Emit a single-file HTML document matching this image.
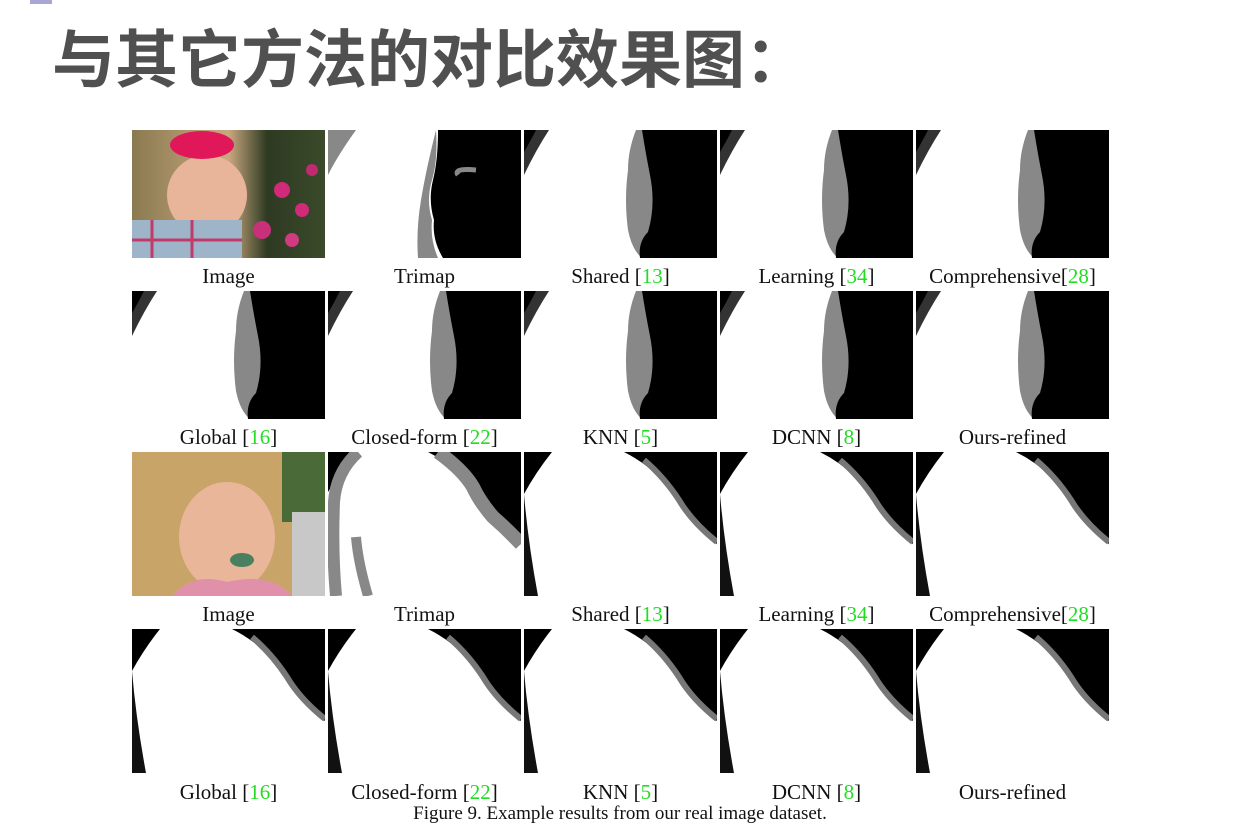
<!DOCTYPE html>
<html><head><meta charset="utf-8"><style>
body{margin:0;width:1233px;height:828px;background:#fff;position:relative;overflow:hidden;font-family:"Liberation Serif",serif}
.t{position:absolute;left:52px;top:10px;font:bold 63px "Noto Sans CJK SC","WenQuanYi Zen Hei",sans-serif;color:#505050;letter-spacing:0;white-space:nowrap}
.bar{position:absolute;left:30px;top:0;width:22px;height:4px;background:#a9a6d6}
svg.c{position:absolute;width:193px}
.l{position:absolute;width:193px;text-align:center;font-size:21px;color:#111;white-space:nowrap}
.g{color:#22dd22}
.cap{position:absolute;left:0;width:1240px;text-align:center;top:803px;font-size:19px;color:#111}
</style></head><body>
<div class="bar"></div>
<div class="t">与其它方法的对比效果图：</div>
<svg width="0" height="0" style="position:absolute">
<defs>
<g id="m1"><rect width="193" height="128" fill="#fff"/><path d="M0 0H25Q12 20 0 45Z" fill="#333"/><path d="M0 0H12Q6 12 0 22Z" fill="#000"/>
<path d="M104 40Q100 70 104 100Q108 120 118 128H130V0H112Q104 20 104 40Z" fill="#888"/>
<path d="M118 0H193V128H116Q114 112 124 102Q132 75 126 45Q122 25 118 0Z" fill="#000"/></g>
<g id="m2"><rect width="193" height="144" fill="#fff"/><path d="M0 0H28Q12 20 0 42Z" fill="#000"/><path d="M0 42Q4 90 14 144H0Z" fill="#111"/>
<path d="M100 0H193V92Q175 78 165 65Q150 40 135 25Q120 10 100 0Z" fill="#000"/><path d="M120 8Q140 25 155 48Q168 70 193 90" stroke="#777" stroke-width="6" fill="none"/></g>
</defs></svg>

<!-- Row 1 -->
<svg class="c" style="left:132px;top:130px;height:128px" viewBox="0 0 193 128" preserveAspectRatio="none">
<defs><linearGradient id="bg1" x1="0" x2="1"><stop offset="0" stop-color="#8a7a50"/><stop offset=".5" stop-color="#c9a880"/><stop offset=".7" stop-color="#2e3a22"/><stop offset="1" stop-color="#3a4a2a"/></linearGradient></defs>
<rect width="193" height="128" fill="url(#bg1)"/>
<ellipse cx="75" cy="65" rx="40" ry="40" fill="#e8b49a"/>
<path d="M0 90H110V128H0Z" fill="#9eb4c8"/><path d="M20 90V128M60 90V128M0 110H110" stroke="#c23a6a" stroke-width="3"/>
<ellipse cx="70" cy="15" rx="32" ry="14" fill="#e0185a"/>
<circle cx="150" cy="60" r="8" fill="#d02a78"/><circle cx="170" cy="80" r="7" fill="#d02a78"/><circle cx="130" cy="100" r="9" fill="#c8307a"/><circle cx="180" cy="40" r="6" fill="#c02a70"/><circle cx="160" cy="110" r="7" fill="#d03a80"/>
</svg>
<svg class="c" style="left:328px;top:130px;height:128px" viewBox="0 0 193 128" preserveAspectRatio="none">
<rect width="193" height="128" fill="#fff"/><path d="M0 0H28Q10 25 0 45Z" fill="#888"/><path d="M110 0H193V128H115Q104 110 106 90Q100 70 105 50Q110 30 110 0Z" fill="#000"/><path d="M108 0Q110 30 104 50Q98 70 104 90Q102 110 110 128H90Q88 100 93 70Q98 40 108 0Z" fill="#888"/><path d="M130 45Q125 38 148 40" stroke="#888" stroke-width="5" fill="none"/>
</svg>
<svg class="c" style="left:524px;top:130px;height:128px" viewBox="0 0 193 128" preserveAspectRatio="none"><use href="#m1"/></svg>
<svg class="c" style="left:720px;top:130px;height:128px" viewBox="0 0 193 128" preserveAspectRatio="none"><use href="#m1"/></svg>
<svg class="c" style="left:916px;top:130px;height:128px" viewBox="0 0 193 128" preserveAspectRatio="none"><use href="#m1"/></svg>
<div class="l" style="left:132px;top:264px">Image</div>
<div class="l" style="left:328px;top:264px">Trimap</div>
<div class="l" style="left:524px;top:264px">Shared [<span class="g">13</span>]</div>
<div class="l" style="left:720px;top:264px">Learning [<span class="g">34</span>]</div>
<div class="l" style="left:916px;top:264px">Comprehensive[<span class="g">28</span>]</div>

<!-- Row 2 -->
<svg class="c" style="left:132px;top:291px;height:128px" viewBox="0 0 193 128" preserveAspectRatio="none"><use href="#m1"/></svg>
<svg class="c" style="left:328px;top:291px;height:128px" viewBox="0 0 193 128" preserveAspectRatio="none"><use href="#m1"/></svg>
<svg class="c" style="left:524px;top:291px;height:128px" viewBox="0 0 193 128" preserveAspectRatio="none"><use href="#m1"/></svg>
<svg class="c" style="left:720px;top:291px;height:128px" viewBox="0 0 193 128" preserveAspectRatio="none"><use href="#m1"/></svg>
<svg class="c" style="left:916px;top:291px;height:128px" viewBox="0 0 193 128" preserveAspectRatio="none"><use href="#m1"/></svg>
<div class="l" style="left:132px;top:425px">Global [<span class="g">16</span>]</div>
<div class="l" style="left:328px;top:425px">Closed-form [<span class="g">22</span>]</div>
<div class="l" style="left:524px;top:425px">KNN [<span class="g">5</span>]</div>
<div class="l" style="left:720px;top:425px">DCNN [<span class="g">8</span>]</div>
<div class="l" style="left:916px;top:425px">Ours-refined</div>

<!-- Row 3 -->
<svg class="c" style="left:132px;top:452px;height:144px" viewBox="0 0 193 144" preserveAspectRatio="none">
<rect width="193" height="144" fill="#c8a468"/><rect x="150" width="43" height="70" fill="#4a6a38"/><rect x="160" y="60" width="33" height="84" fill="#c8c8c8"/>
<ellipse cx="95" cy="85" rx="48" ry="55" fill="#eab69a"/><path d="M40 144Q60 120 95 130Q140 120 160 144Z" fill="#e090a8"/>
<ellipse cx="110" cy="108" rx="12" ry="7" fill="#4a8060"/>
</svg>
<svg class="c" style="left:328px;top:452px;height:144px" viewBox="0 0 193 144" preserveAspectRatio="none">
<rect width="193" height="144" fill="#fff"/><path d="M0 0H30Q12 20 0 40Z" fill="#000"/><path d="M100 0H193V92Q175 78 165 65Q150 40 135 25Q120 10 100 0Z" fill="#000"/>
<path d="M110 0Q135 18 145 35Q152 50 165 65Q180 78 193 92" stroke="#888" stroke-width="14" fill="none"/>
<path d="M30 0Q8 20 6 50Q4 100 8 144" stroke="#888" stroke-width="12" fill="none"/><path d="M28 85Q30 110 40 144" stroke="#888" stroke-width="10" fill="none"/>
</svg>
<svg class="c" style="left:524px;top:452px;height:144px" viewBox="0 0 193 144" preserveAspectRatio="none"><use href="#m2"/></svg>
<svg class="c" style="left:720px;top:452px;height:144px" viewBox="0 0 193 144" preserveAspectRatio="none"><use href="#m2"/></svg>
<svg class="c" style="left:916px;top:452px;height:144px" viewBox="0 0 193 144" preserveAspectRatio="none"><use href="#m2"/></svg>
<div class="l" style="left:132px;top:602px">Image</div>
<div class="l" style="left:328px;top:602px">Trimap</div>
<div class="l" style="left:524px;top:602px">Shared [<span class="g">13</span>]</div>
<div class="l" style="left:720px;top:602px">Learning [<span class="g">34</span>]</div>
<div class="l" style="left:916px;top:602px">Comprehensive[<span class="g">28</span>]</div>

<!-- Row 4 -->
<svg class="c" style="left:132px;top:629px;height:144px" viewBox="0 0 193 144" preserveAspectRatio="none"><use href="#m2"/></svg>
<svg class="c" style="left:328px;top:629px;height:144px" viewBox="0 0 193 144" preserveAspectRatio="none"><use href="#m2"/></svg>
<svg class="c" style="left:524px;top:629px;height:144px" viewBox="0 0 193 144" preserveAspectRatio="none"><use href="#m2"/></svg>
<svg class="c" style="left:720px;top:629px;height:144px" viewBox="0 0 193 144" preserveAspectRatio="none"><use href="#m2"/></svg>
<svg class="c" style="left:916px;top:629px;height:144px" viewBox="0 0 193 144" preserveAspectRatio="none"><use href="#m2"/></svg>
<div class="l" style="left:132px;top:780px">Global [<span class="g">16</span>]</div>
<div class="l" style="left:328px;top:780px">Closed-form [<span class="g">22</span>]</div>
<div class="l" style="left:524px;top:780px">KNN [<span class="g">5</span>]</div>
<div class="l" style="left:720px;top:780px">DCNN [<span class="g">8</span>]</div>
<div class="l" style="left:916px;top:780px">Ours-refined</div>
<div class="cap">Figure 9. Example results from our real image dataset.</div>
</body></html>
